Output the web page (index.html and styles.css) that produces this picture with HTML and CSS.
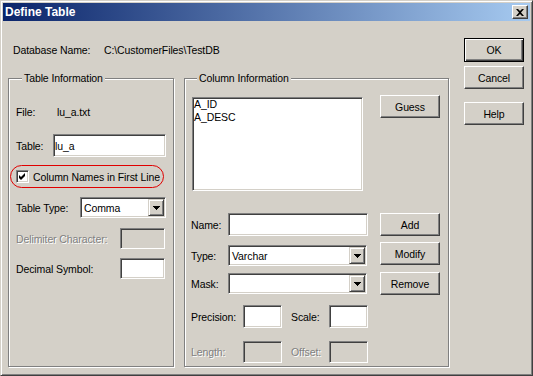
FILE: index.html
```html
<!DOCTYPE html>
<html>
<head>
    <title>Define Table</title>
    <link rel="stylesheet" href="styles.css">
</head>
<body>
<div class="window">
    <div class="titlebar">
        <span class="title">Define Table</span>
        <span class="close-btn">
            <svg width="8" height="7" viewBox="0 0 8 7"><path d="M0 0h2l2 2 2-2h2L5 3.5 8 7H6L4 5 2 7H0l3-3.5z"/></svg>
        </span>
    </div>

    <div class="content">
        <div class="main">
            <div class="db-row">
                <span class="db-label">Database Name:</span>
                <span>C:\CustomerFiles\TestDB</span>
            </div>

            <div class="groups">
                <!-- Table Information -->
                <fieldset class="group group-table">
                    <legend>Table Information</legend>

                    <div class="row file-row">
                        <span class="lbl-file">File:</span>
                        <span>lu_a.txt</span>
                    </div>

                    <div class="row table-row">
                        <label class="lbl-table">Table:</label>
                        <input class="field input-table" type="text" value="lu_a">
                    </div>

                    <div class="row check-row">
                        <span class="checkbox">
                            <svg width="7" height="7" viewBox="0 0 7 7"><path d="M0 2l2 2 4-4v3l-4 4-2-2z"/></svg>
                        </span>
                        <span>Column Names in First Line</span>
                    </div>

                    <div class="row type-row">
                        <label class="lbl-type">Table Type:</label>
                        <div class="field select select-type">
                            <span class="select-value">Comma</span>
                            <span class="drop-btn"><svg width="7" height="4" viewBox="0 0 7 4"><path d="M0 0h7v1h-1v1h-1v1h-1v1h-1v-1h-1v-1h-1v-1h-1z"/></svg></span>
                        </div>
                    </div>

                    <div class="row delim-row">
                        <label class="lbl-small disabled">Delimiter Character:</label>
                        <input class="field input-small" type="text" disabled>
                    </div>

                    <div class="row decimal-row">
                        <label class="lbl-small">Decimal Symbol:</label>
                        <input class="field input-small" type="text">
                    </div>
                </fieldset>

                <!-- Column Information -->
                <fieldset class="group group-cols">
                    <legend>Column Information</legend>

                    <div class="list-row">
                        <div class="field listbox">
                            <div>A_ID</div>
                            <div>A_DESC</div>
                        </div>
                        <button class="btn btn-guess">Guess</button>
                    </div>

                    <div class="col-form">
                        <div class="fields">
                            <div class="row name-row">
                                <label class="lbl-col">Name:</label>
                                <input class="field input-name" type="text">
                            </div>
                            <div class="row coltype-row">
                                <label class="lbl-col">Type:</label>
                                <div class="field select select-col">
                                    <span class="select-value">Varchar</span>
                                    <span class="drop-btn"><svg width="7" height="4" viewBox="0 0 7 4"><path d="M0 0h7v1h-1v1h-1v1h-1v1h-1v-1h-1v-1h-1v-1h-1z"/></svg></span>
                                </div>
                            </div>
                            <div class="row mask-row">
                                <label class="lbl-col">Mask:</label>
                                <div class="field select select-col">
                                    <span class="select-value"></span>
                                    <span class="drop-btn"><svg width="7" height="4" viewBox="0 0 7 4"><path d="M0 0h7v1h-1v1h-1v1h-1v1h-1v-1h-1v-1h-1v-1h-1z"/></svg></span>
                                </div>
                            </div>
                            <div class="row prec-row">
                                <label class="lbl-prec">Precision:</label>
                                <input class="field input-num" type="text">
                                <label class="lbl-scale">Scale:</label>
                                <input class="field input-num" type="text">
                            </div>
                            <div class="row length-row">
                                <label class="lbl-prec disabled">Length:</label>
                                <input class="field input-num" type="text" disabled>
                                <label class="lbl-scale disabled">Offset:</label>
                                <input class="field input-num" type="text" disabled>
                            </div>
                        </div>

                        <div class="actions">
                            <button class="btn">Add</button>
                            <button class="btn btn-modify">Modify</button>
                            <button class="btn btn-remove">Remove</button>
                        </div>
                    </div>
                </fieldset>
            </div>
        </div>

        <div class="side">
            <button class="btn btn-default">OK</button>
            <button class="btn btn-cancel">Cancel</button>
            <button class="btn btn-help">Help</button>
        </div>
    </div>
</div>
</body>
</html>
```

FILE: styles.css
```css
body {
    margin: 0;
    font-family: "Liberation Sans", Arial, sans-serif;
    font-size: 10.5px;
    letter-spacing: -0.1px;
    color: #000;
}
.window {
    width: 533px;
    height: 376px;
    box-sizing: border-box;
    background-color: #d4d0c8;
    border: 1px solid;
    border-color: #d4d0c8 #404040 #404040 #d4d0c8;
    box-shadow: inset 1px 1px #fff, inset -1px -1px #808080;
    padding: 2px;
    display: flex;
    flex-direction: column;
    white-space: nowrap;
}

/* title bar */
.titlebar {
    height: 18px;
    flex-shrink: 0;
    display: flex;
    align-items: center;
    justify-content: space-between;
    padding: 0 2px;
    background: linear-gradient(to right, #0a246a, #a6caf0);
    color: #fff;
}
.title {
    font-weight: bold;
    font-size: 12px;
    letter-spacing: 0;
}
.close-btn {
    width: 16px;
    height: 14px;
    box-sizing: border-box;
    display: flex;
    align-items: center;
    justify-content: center;
    background-color: #d4d0c8;
    border: 1px solid;
    border-color: #fff #404040 #404040 #fff;
    box-shadow: inset -1px -1px #808080;
}

/* layout */
.content {
    flex: 1;
    display: flex;
}
.main {
    width: 446px;
    padding-left: 5px;
    box-sizing: border-box;
}
.db-row {
    display: flex;
    margin: 23px 0 0 5px;
    line-height: 13px;
}
.db-label {
    width: 91px;
}
.groups {
    display: flex;
    gap: 10px;
    margin-top: 15px;
}
.group {
    margin: 0;
    padding: 0;
    min-width: 0;
    height: 295px;
    box-sizing: border-box;
    border: 1px solid #808080;
    box-shadow: 1px 1px 0 #fff, inset 1px 1px 0 #fff;
}
.group legend {
    padding: 0 2px;
    margin-left: 6px;
    line-height: 13px;
    background-color: #d4d0c8;
}
.group-table {
    width: 166px;
    padding-left: 7px;
}
.group-cols {
    width: 265px;
    padding-left: 6px;
}
.side {
    margin-left: 15px;
    padding-top: 17px;
    display: flex;
    flex-direction: column;
}

/* controls */
.row {
    display: flex;
    align-items: center;
}
.field {
    box-sizing: border-box;
    margin: 0;
    font: inherit;
    letter-spacing: inherit;
    background-color: #fff;
    border: 1px solid;
    border-color: #808080 #fff #fff #808080;
    box-shadow: inset 1px 1px #404040, inset -1px -1px #d4d0c8;
    padding: 0 1px;
    outline: none;
}
.field:disabled {
    background-color: #d4d0c8;
}
.select {
    display: flex;
    align-items: center;
    padding: 1px;
}
.select-value {
    flex: 1;
    padding-left: 2px;
}
.drop-btn {
    width: 16px;
    height: 100%;
    box-sizing: border-box;
    display: flex;
    align-items: center;
    justify-content: center;
    background-color: #d4d0c8;
    border: 1px solid;
    border-color: #d4d0c8 #404040 #404040 #d4d0c8;
    box-shadow: inset 1px 1px #fff, inset -1px -1px #808080;
}
.checkbox {
    width: 13px;
    height: 13px;
    flex-shrink: 0;
    box-sizing: border-box;
    display: flex;
    align-items: center;
    justify-content: center;
    background-color: #fff;
    border: 1px solid;
    border-color: #808080 #fff #fff #808080;
    box-shadow: inset 1px 1px #404040, inset -1px -1px #d4d0c8;
    margin-right: 4px;
}
.disabled {
    color: #808080;
    text-shadow: 1px 1px 0 #fff;
}
.btn {
    width: 60px;
    height: 23px;
    padding: 0;
    font: inherit;
    letter-spacing: inherit;
    color: #000;
    background-color: #d4d0c8;
    border: 1px solid;
    border-color: #fff #404040 #404040 #fff;
    box-shadow: inset -1px -1px #808080;
}
.btn-default {
    height: 24px;
    border-color: #000;
    box-shadow: inset 1px 1px #fff, inset -1px -1px #404040, inset -2px -2px #808080;
}
.btn-cancel {
    margin-top: 4px;
}
.btn-help {
    margin-top: 13px;
}

/* table information rows */
.file-row {
    margin-top: 21px;
    line-height: 13px;
}
.lbl-file {
    width: 41px;
}
.table-row {
    margin-top: 15px;
}
.lbl-table {
    width: 37px;
}
.input-table {
    width: 113px;
    height: 23px;
}
.check-row {
    margin-top: 8px;
    margin-left: -6px;
    width: 154px;
    height: 23px;
    box-sizing: border-box;
    padding-left: 5px;
    border: 1px solid #e00000;
    border-radius: 12px;
}
.type-row {
    margin-top: 9px;
}
.lbl-type {
    width: 64px;
}
.select-type {
    width: 86px;
    height: 21px;
}
.delim-row {
    margin-top: 10px;
}
.decimal-row {
    margin-top: 9px;
}
.lbl-small {
    width: 104px;
}
.input-small {
    width: 45px;
    height: 21px;
}

/* column information */
.list-row {
    display: flex;
    align-items: flex-start;
    margin-top: 10px;
}
.listbox {
    width: 171px;
    height: 94px;
    margin: 2px 0 0 1px;
    line-height: 13px;
}
.btn-guess {
    margin-left: 17px;
}
.col-form {
    display: flex;
    margin-top: 22px;
}
.fields {
    width: 177px;
}
.lbl-col {
    width: 37px;
}
.input-name {
    width: 140px;
    height: 23px;
}
.select-col {
    width: 139px;
    height: 21px;
}
.coltype-row {
    margin-top: 9px;
}
.mask-row {
    margin-top: 7px;
}
.prec-row {
    margin-top: 11px;
}
.length-row {
    margin-top: 13px;
}
.lbl-prec {
    width: 52px;
}
.lbl-scale {
    width: 38px;
    margin-left: 9px;
}
.input-num {
    width: 39px;
    height: 23px;
}
.length-row .input-num {
    height: 22px;
}
.actions {
    margin-left: 12px;
    display: flex;
    flex-direction: column;
}
.btn-modify {
    margin-top: 6px;
}
.btn-remove {
    margin-top: 7px;
}
```
